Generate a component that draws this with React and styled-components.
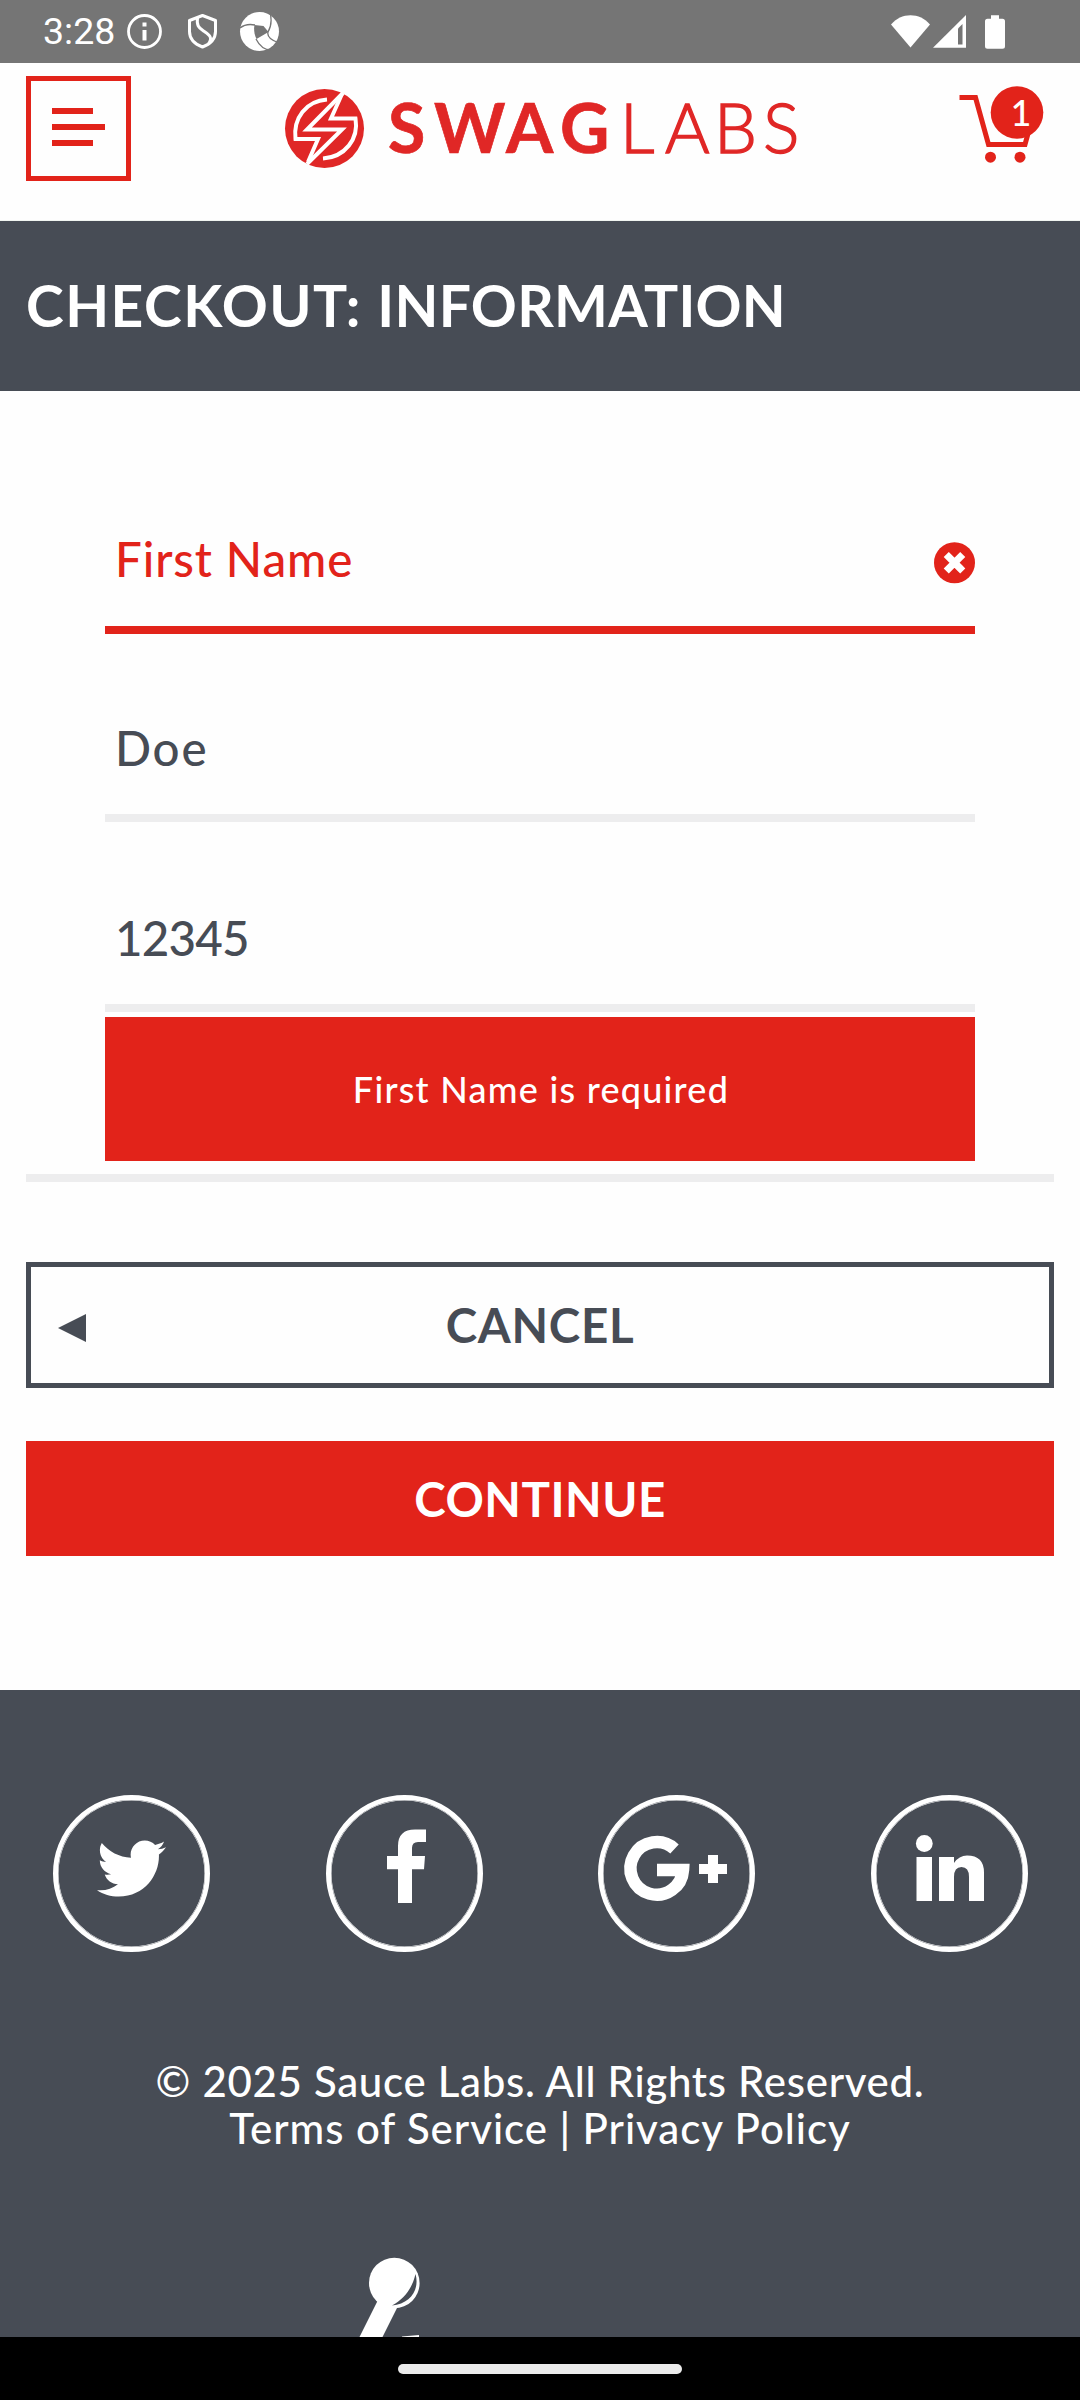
import React from "react";
import styled, { createGlobalStyle } from "styled-components";
import { FaTwitter } from "react-icons/fa";

const RED = "#e2231a";
const LOGO_RED = "#e02726";
const SLATE = "#474c55";
const LINE = "#ededee";

const GlobalStyle = createGlobalStyle`
  html, body { margin: 0; padding: 0; background: #fefefe; }
  * { box-sizing: border-box; }
  svg { display: block; flex: none; }
`;

const Screen = styled.div`
  width: 1080px;
  height: 2400px;
  overflow: hidden;
  display: flex;
  flex-direction: column;
  background: #fefefe;
  color: ${SLATE};
  font-family: Lato, "Open Sans", sans-serif;
  font-weight: 500;
`;

const StatusBar = styled.div`
  height: 63px;
  flex: none;
  display: flex;
  align-items: center;
  justify-content: space-between;
  padding: 0 74px 0 43px;
  background: #757575;
  color: #fff;
`;

const StatusGroup = styled.div`
  display: flex;
  align-items: center;
`;

const Clock = styled.span`
  width: 81px;
  font-family: Roboto, sans-serif;
  font-weight: 400;
  font-size: 37.5px;
  line-height: 63px;
`;

const Header = styled.header`
  height: 157px;
  flex: none;
  display: flex;
  align-items: flex-start;
  justify-content: space-between;
  padding: 13px 26px 0;
`;

const MenuButton = styled.div`
  width: 105px;
  height: 105px;
  border: 5px solid ${RED};
  display: flex;
  flex-direction: column;
  gap: 10px;
  padding: 27px 0 0 21px;
`;

const MenuLine = styled.span`
  width: ${(p) => p.$w}px;
  height: 6px;
  background: ${RED};
`;

const LogoMark = styled.svg`
  margin: 11px 7px 0 0;
`;

const CartMark = styled.svg`
  margin: 9px 10px 0 0;
`;

const TitleBar = styled.div`
  height: 171px;
  flex: none;
  border-top: 1px solid #f1f5f1;
  padding-left: 26px;
  background: ${SLATE};
  background-clip: padding-box;
`;

const Title = styled.h1`
  margin: 0;
  font-size: 57px;
  line-height: 168px;
  font-weight: 700;
  color: #fff;
  white-space: nowrap;
`;

const TitleWord = styled.span`
  letter-spacing: ${(p) => p.$ls}px;
`;

const Form = styled.div`
  display: flex;
  flex-direction: column;
  flex: none;
  padding: 65px 105px 0;
`;

const Field = styled.div`
  height: ${(p) => p.$h}px;
  display: flex;
  justify-content: space-between;
  align-items: flex-end;
  border-bottom: 8px solid ${(p) => (p.$error ? RED : LINE)};
  color: ${(p) => (p.$error ? RED : SLATE)};
  padding-bottom: ${(p) => (p.$error ? 37 : 36)}px;
`;

const FieldText = styled.span`
  font-size: 47.5px;
  line-height: 60px;
  padding-left: 10px;
  letter-spacing: ${(p) => p.$ls}px;
`;

const ErrorBanner = styled.div`
  height: 144px;
  margin-top: 5px;
  padding-left: 2px;
  background: ${RED};
  color: #fff;
  font-size: 36px;
  line-height: 144px;
  text-align: center;
  letter-spacing: ${(p) => p.$ls}px;
`;

const Divider = styled.div`
  height: 8px;
  flex: none;
  margin: 13px 26px 0;
  background: ${LINE};
`;

const Actions = styled.div`
  display: flex;
  flex-direction: column;
  flex: none;
  gap: 53px;
  padding: 80px 26px 134px;
`;

const Button = styled.div`
  height: ${(p) => (p.$filled ? 115 : 126)}px;
  display: grid;
  grid-template-columns: 60px 1fr 60px;
  align-items: center;
  border: ${(p) => (p.$filled ? "0" : `5px solid ${SLATE}`)};
  background: ${(p) => (p.$filled ? RED : "#fefefe")};
  color: ${(p) => (p.$filled ? "#fff" : SLATE)};
`;

const ButtonLabel = styled.span`
  grid-column: 2;
  grid-row: 1;
  text-align: center;
  font-size: 47.5px;
  line-height: 60px;
  font-weight: 700;
  letter-spacing: ${(p) => p.$ls}px;
`;

const ArrowSlot = styled.span`
  grid-column: 1;
  grid-row: 1;
  padding: 5px 0 0 27px;
`;

const Footer = styled.footer`
  flex: 1;
  min-height: 0;
  overflow: hidden;
  background: ${SLATE};
  color: #fff;
  padding-top: 105px;
`;

const Socials = styled.div`
  display: flex;
  justify-content: space-between;
  padding: 0 52px 0 53px;
`;

const SocialRing = styled.div`
  width: 157px;
  height: 157px;
  border: 5px solid #fff;
  box-shadow: inset 0 0 0 0.5px #fff;
  border-radius: 50%;
  display: flex;
  align-items: center;
  justify-content: center;
`;

const TwitterMark = styled(FaTwitter)`
  margin-top: -10px;
`;

const Legal = styled.div`
  margin-top: 106px;
  text-align: center;
`;

const LegalLine = styled.div`
  font-size: 42px;
  line-height: 47px;
  letter-spacing: ${(p) => p.$ls}px;
`;

const RobotSlot = styled.div`
  padding: 100px 0 0 350px;
`;

const NavBar = styled.div`
  height: 63px;
  flex: none;
  display: flex;
  align-items: center;
  justify-content: center;
  background: #000;
`;

const NavPill = styled.div`
  width: 284px;
  height: 10px;
  border-radius: 5px;
  background: #ebebeb;
`;

const StatusIcons = () => (
  <svg width="158" height="42" viewBox="124 11 158 42">
    <circle cx="144.500" cy="31.500" r="16" fill="none" stroke="#fff" strokeWidth="2.800" />
    <path d="M142.500 22.500h4v4h-4zM142.500 30h4v10.500h-4z" fill="#fff" />
    <path d="M202.500 15.500l13 5v11c0 7-5 12.500-13 15.500c-8-3-13-8.500-13-15.500v-11z" fill="none" stroke="#fff" strokeWidth="3" strokeLinejoin="round" />
    <path d="M197.500 17.500c-1 8 1 10 6 13.500s10 6 5 13" fill="none" stroke="#fff" strokeWidth="3" />
    <circle cx="259.500" cy="31.500" r="19.500" fill="#fff" />
    <path d="M254.500 25l9 1 5 6-12 7c-2-4-3-9-2-14z" fill="#757575" />
    <path d="M240 28c5-4 10-4 15-3M270 12c2 8 1 15-2 20M279 43c-9-3-12-7-11-11M256 39c3 6 8 11 15 11" fill="none" stroke="#757575" strokeWidth="1.300" />
  </svg>
);

const SignalIcons = () => (
  <svg width="116" height="36" viewBox="890 13 116 36">
    <path d="M891 23.500C901 11 920 11 930 23.500L910.500 46.500z" fill="#fff" />
    <path d="M966 14v32.700h-33z" fill="#fff" />
    <path d="M958 27.500l4.500-4.500v20.500H958z" fill="#757575" />
    <path d="M991 14.300h8v3.400h3.500q2.500 0 2.500 2.500v25q0 2.500-2.500 2.500h-15q-2.500 0-2.500-2.500v-25q0-2.500 2.500-2.500h3.500z" fill="#fff" />
  </svg>
);

const Logo = () => (
  <LogoMark width="514" height="82" viewBox="284 87 514 82">
    <circle cx="324.500" cy="128.500" r="39.500" fill={LOGO_RED} />
    <g fill="none" stroke="#fff" strokeWidth="4">
      <path d="M327 99.500C306 101 293 118 295.500 139H318L308 162" />
      <path d="M323 158.500C345 157 359 139 355.500 118.500H331L342 94" />
      <path d="M343 93L307 129.500H342L307 164" />
    </g>
    <g fill={LOGO_RED} stroke={LOGO_RED} fontFamily="Lato, sans-serif" fontSize="68">
      <text x="388 434 506 560" y="153" fontWeight="700" strokeWidth="0.700">SWAG</text>
      <text x="620 665 714 763" y="153" fontWeight="300" strokeWidth="1.400">LABS</text>
    </g>
  </LogoMark>
);

const Cart = () => (
  <CartMark width="86" height="80" viewBox="958 85 86 80">
    <path d="M959.500 97.500h16L988.500 144.500H1025L1029 130" fill="none" stroke={RED} strokeWidth="5" />
    <circle cx="990.500" cy="157.200" r="5.500" fill={RED} />
    <circle cx="1020" cy="157.200" r="5.500" fill={RED} />
    <circle cx="1017" cy="112.500" r="26.300" fill={RED} />
    <text x="1021" y="126" textAnchor="middle" fill="#fff" fontFamily="Lato, sans-serif" fontSize="36">1</text>
  </CartMark>
);

const ErrorMark = styled.svg`
  margin-bottom: 5px;
`;

const ErrorIcon = () => (
  <ErrorMark width="41" height="42" viewBox="0 0 41 42">
    <circle cx="20.500" cy="20.700" r="20.500" fill={RED} />
    <path d="M14.800 15l11.400 11.400M26.200 15l-11.400 11.400" stroke="#fff" strokeWidth="7.200" strokeLinecap="square" />
  </ErrorMark>
);

const FacebookMark = () => (
  <svg width="147" height="147" viewBox="331 1800 147 147">
    <path d="M426 1829.500V1842h-8q-6 0-6 6v8h13l-1 13.300h-12V1903h-14v-33.700h-11V1856h11v-10q0-16.500 17-16.500z" fill="#fff" />
  </svg>
);

const GooglePlusMark = () => (
  <svg width="147" height="147" viewBox="603 1800 147 147">
    <path d="M674.500 1849A26.300 26.300 0 1 0 683 1870H657" fill="none" stroke="#fff" strokeWidth="12.500" />
    <path d="M708 1855h10v9h9v10h-9v9h-10v-9h-9v-10h9z" fill="#fff" />
  </svg>
);

const LinkedinMark = () => (
  <svg width="147" height="147" viewBox="876 1800 147 147">
    <circle cx="924.300" cy="1843.500" r="8.400" fill="#fff" />
    <path d="M916.500 1857H932v44h-15.500zM939 1857h15v6q5-7.500 13-7.500 17 0 17 17V1901h-15v-24q0-10-7.500-10t-7.500 10v24h-15z" fill="#fff" />
  </svg>
);

const Robot = () => (
  <svg width="90" height="90" viewBox="350 2252 90 90">
    <circle cx="394.300" cy="2283" r="25.300" fill="#fff" />
    <path d="M378 2300L357 2342h23L398 2306z" fill="#fff" />
    <path d="M415.500 2274C420 2290 410 2304 392 2305.500C404 2299 412 2289 415.500 2274z" fill={SLATE} />
    <path d="M402 2336.500l17-1.500v7h-17z" fill="#fff" />
  </svg>
);

export default function App() {
  return (
    <Screen>
      <GlobalStyle />
      <StatusBar>
        <StatusGroup>
          <Clock>3:28</Clock>
          <StatusIcons />
        </StatusGroup>
        <SignalIcons />
      </StatusBar>
      <Header>
        <MenuButton>
          <MenuLine $w={41} />
          <MenuLine $w={53} />
          <MenuLine $w={41} />
        </MenuButton>
        <Logo />
        <Cart />
      </Header>
      <TitleBar>
        <Title>
          <TitleWord $ls={1.5}>CHECKOUT: </TitleWord>
          <TitleWord $ls={0.25}>INFORMATION</TitleWord>
        </Title>
      </TitleBar>
      <Form>
        <Field $error $h={178}>
          <FieldText $ls={0.9}>First Name</FieldText>
          <ErrorIcon />
        </Field>
        <Field $h={188}>
          <FieldText $ls={1.8}>Doe</FieldText>
        </Field>
        <Field $h={190}>
          <FieldText $ls={-0.8}>12345</FieldText>
        </Field>
        <ErrorBanner $ls={1.25}>First Name is required</ErrorBanner>
      </Form>
      <Divider />
      <Actions>
        <Button>
          <ArrowSlot>
            <svg width="28" height="28" viewBox="0 0 28 28">
              <path d="M28 0v28L0 14z" fill={SLATE} />
            </svg>
          </ArrowSlot>
          <ButtonLabel $ls={0.7}>CANCEL</ButtonLabel>
        </Button>
        <Button $filled>
          <ButtonLabel $ls={0.5}>CONTINUE</ButtonLabel>
        </Button>
      </Actions>
      <Footer>
        <Socials>
          <SocialRing><TwitterMark size={69} /></SocialRing>
          <SocialRing><FacebookMark /></SocialRing>
          <SocialRing><GooglePlusMark /></SocialRing>
          <SocialRing><LinkedinMark /></SocialRing>
        </Socials>
        <Legal>
          <LegalLine $ls={0.7}>© 2025 Sauce Labs. All Rights Reserved.</LegalLine>
          <LegalLine $ls={0.95}>Terms of Service | Privacy Policy</LegalLine>
        </Legal>
        <RobotSlot><Robot /></RobotSlot>
      </Footer>
      <NavBar><NavPill /></NavBar>
    </Screen>
  );
}
